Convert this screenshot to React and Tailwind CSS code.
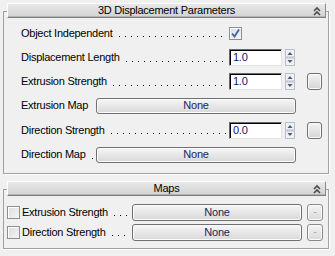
// double chevron used in rollout headers
function Chevron() {
  return (
    <svg width="8" height="10" viewBox="0 0 8 10" className="justify-self-end mr-[4px]">
      <path d="M1 5 L4 2 L7 5" fill="none" stroke="#4a4a4a" strokeWidth="1.6" />
      <path d="M1 9 L4 6 L7 9" fill="none" stroke="#4a4a4a" strokeWidth="1.6" />
    </svg>
  );
}

function Header({ title }) {
  return (
    <div className="relative z-10 ml-[4px] mr-[3px] h-[15px] grid grid-cols-[1fr_auto_1fr] items-center border-t border-l border-b border-r border-t-white border-l-white border-b-[#7c7c7c] border-r-[#8c8c8c] bg-gradient-to-b from-[#e8e8e8] to-[#d2d2d2] shadow-[inset_0_-1px_0_#b4b4b4]">
      <span />
      <span className="text-[11px] leading-none text-black">{title}</span>
      <Chevron />
    </div>
  );
}

// label followed by a dotted leader that fills the rest of its column
function Label({ text, width, noDots }) {
  return (
    <div className={`${width} flex items-center pr-[2px]`}>
      <span className="whitespace-nowrap text-[11px] leading-none text-black">{text}</span>
      {!noDots && (
        <span className="ml-[6px] flex-1 h-[1px] mt-[7px] bg-[linear-gradient(to_right,#000000_1px,transparent_1px)] bg-[length:6px_1px]" />
      )}
    </div>
  );
}

function Checkbox({ checked }) {
  return (
    <div className="w-[13px] h-[13px] shrink-0 border border-[#8e8f8f] bg-gradient-to-br from-[#dcdcdc] to-[#f4f4f4] shadow-[inset_1px_1px_0_#ffffff] flex items-center justify-center">
      {checked && (
        <svg width="11" height="11" viewBox="0 0 11 11">
          <path d="M2 5.5 L4.5 8.5 L9 1.5" fill="none" stroke="#3d63a8" strokeWidth="1.8" />
        </svg>
      )}
    </div>
  );
}

function Spinner() {
  return (
    <svg width="10" height="17" viewBox="0 0 10 17" className="ml-[3px]">
      <rect x="0.5" y="0.5" width="9" height="7.5" fill="#eef0f4" stroke="#b7bfcc" />
      <rect x="0.5" y="9" width="9" height="7.5" fill="#eef0f4" stroke="#b7bfcc" />
      <path d="M2.5 6 L5 3 L7.5 6 Z" fill="#4d5a74" />
      <path d="M2.5 11 L5 14 L7.5 11 Z" fill="#4d5a74" />
    </svg>
  );
}

function NumberInput({ value }) {
  return (
    <div className="w-[53px] h-[17px] bg-white border border-[#6a6a6a] border-b-[#e2e2e2] border-r-[#e2e2e2] shadow-[inset_1px_1px_0_#000000] pl-[3px] flex items-center text-[11px] leading-none text-[#0a1a6a]">
      {value}
    </div>
  );
}

function SquareButton() {
  return (
    <div className="w-[15px] h-[17px] rounded-[3px] border border-[#707070] bg-gradient-to-b from-[#f4f4f4] to-[#d4d4d4] shadow-[inset_0_0_0_1px_#fafafa]" />
  );
}

function MapButton({ width }) {
  return (
    <div className={`${width} h-[16px] rounded-[3px] border border-[#707070] bg-gradient-to-b from-[#f6f6f6] to-[#d8d8d8] shadow-[inset_0_0_0_1px_#fbfbfb] flex items-center justify-center text-[11px] leading-none text-[#1a1f5a]`}>
      None
    </div>
  );
}

function SmallButton() {
  return (
    <div className="w-[16px] h-[17px] rounded-[3px] border border-[#8a8a8a] bg-gradient-to-b from-[#f4f4f4] to-[#dadada] shadow-[inset_0_0_0_1px_#fbfbfb] flex items-center justify-center text-[10px] leading-none text-[#a8a8a8]">
      -
    </div>
  );
}

export default function App() {
  return (
    <div
      className="w-[335px] h-[256px] bg-[#f0f0f0] pt-[3px] tracking-[-0.25px]"
      style={{ fontFamily: '"Liberation Sans", Arial, sans-serif' }}
    >
      {/* 3D Displacement Parameters rollout */}
      <div className="ml-[3px] w-[326px]">
        <Header title="3D Displacement Parameters" />
        <div className="-mt-[7px] border border-[#a0a0a0] shadow-[1px_1px_0_#ffffff] pl-[17px] pt-[9px] pb-[6px]">
          <div className="flex items-center h-[24px]">
            <Label text="Object Independent" width="w-[208px]" />
            <Checkbox checked />
          </div>
          <div className="flex items-center h-[25px]">
            <Label text="Displacement Length" width="w-[208px]" />
            <NumberInput value="1.0" />
            <Spinner />
          </div>
          <div className="flex items-center h-[23px]">
            <Label text="Extrusion Strength" width="w-[208px]" />
            <NumberInput value="1.0" />
            <Spinner />
            <div className="ml-[12px]">
              <SquareButton />
            </div>
          </div>
          <div className="flex items-center h-[25px]">
            <Label text="Extrusion Map" width="w-[75px]" noDots />
            <MapButton width="w-[200px]" />
          </div>
          <div className="flex items-center h-[24px]">
            <Label text="Direction Strength" width="w-[208px]" />
            <NumberInput value="0.0" />
            <Spinner />
            <div className="ml-[12px]">
              <SquareButton />
            </div>
          </div>
          <div className="flex items-center h-[25px]">
            <Label text="Direction Map" width="w-[75px]" />
            <MapButton width="w-[200px]" />
          </div>
        </div>
      </div>

      {/* Maps rollout */}
      <div className="ml-[3px] w-[326px] mt-[7px]">
        <Header title="Maps" />
        <div className="-mt-[7px] border border-[#a0a0a0] shadow-[1px_1px_0_#ffffff] pl-[3px] pt-[12px] pb-[6px]">
          <div className="flex items-center h-[20px]">
            <Checkbox />
            <div className="ml-[2px]">
              <Label text="Extrusion Strength" width="w-[110px]" />
            </div>
            <MapButton width="w-[170px] h-[17px]" />
            <div className="ml-[5px]">
              <SmallButton />
            </div>
          </div>
          <div className="flex items-center h-[20px]">
            <Checkbox />
            <div className="ml-[2px]">
              <Label text="Direction Strength" width="w-[110px]" />
            </div>
            <MapButton width="w-[170px] h-[17px]" />
            <div className="ml-[5px]">
              <SmallButton />
            </div>
          </div>
        </div>
      </div>
    </div>
  );
}
